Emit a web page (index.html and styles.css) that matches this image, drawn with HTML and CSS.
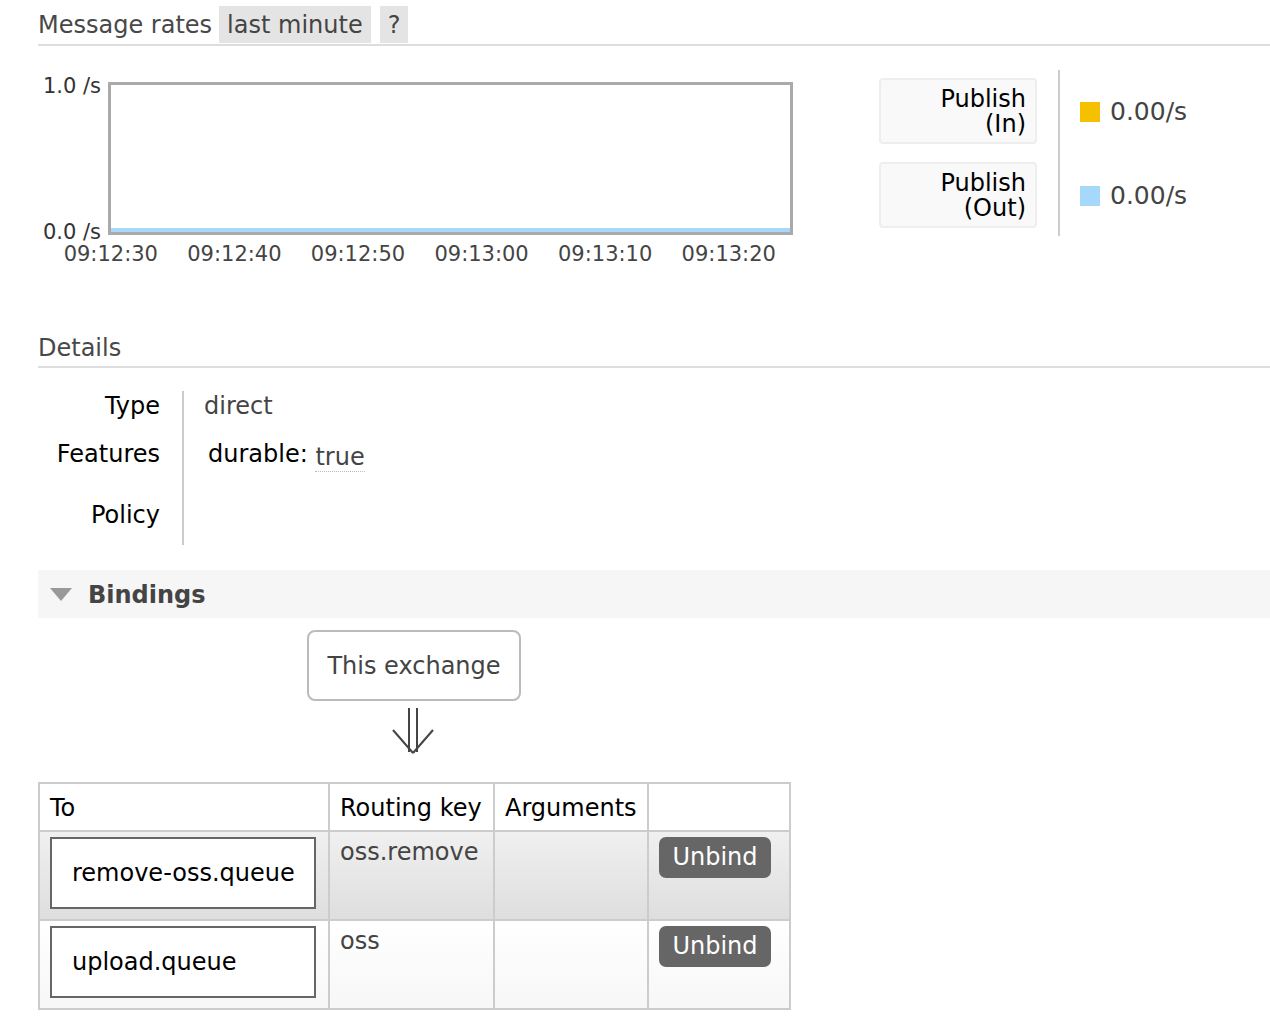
FILE: index.html
```html
<!DOCTYPE html>
<html>
<head>
<meta charset="utf-8">
<link rel="stylesheet" href="styles.css">
</head>
<body>
<div class="page">
  <h2 class="sec-head">
    <span class="sec-title">Message rates</span>
    <span class="chip"><span class="chip-text">last minute</span></span>
    <span class="chip chip-q"><span class="chip-text">?</span></span>
  </h2>

  <div class="rates">
    <div class="chart">
      <div class="chart-main">
        <div class="y-axis">
          <span>1.0 /s</span>
          <span>0.0 /s</span>
        </div>
        <div class="plot"><div class="plot-line"></div></div>
      </div>
      <div class="x-axis">
        <span>09:12:30</span>
        <span>09:12:40</span>
        <span>09:12:50</span>
        <span>09:13:00</span>
        <span>09:13:10</span>
        <span>09:13:20</span>
      </div>
    </div>

    <div class="legend">
      <div class="legend-labels">
        <div class="legend-box"><div>Publish</div><div>(In)</div></div>
        <div class="legend-box"><div>Publish</div><div>(Out)</div></div>
      </div>
      <div class="legend-values">
        <div class="legend-val"><span class="swatch swatch-in"></span>0.00/s</div>
        <div class="legend-val"><span class="swatch swatch-out"></span>0.00/s</div>
      </div>
    </div>
  </div>

  <h2 class="sec-head details-head">
    <span class="sec-title">Details</span>
  </h2>

  <div class="details">
    <div class="d-label d-r1">Type</div>
    <div class="d-value d-r1 muted">direct</div>
    <div class="d-label d-r2">Features</div>
    <div class="d-value d-r2 d-feat">durable: <span class="dotted">true</span></div>
    <div class="d-label d-r3">Policy</div>
    <div class="d-value d-r3"></div>
  </div>

  <div class="bind-head">
    <svg class="tri" width="22" height="13" viewBox="0 0 22 13"><polygon points="0,0 22,0 11,13" fill="#999"/></svg>
    <span class="bind-title">Bindings</span>
  </div>

  <div class="exchange-box">This exchange</div>
  <svg class="arrow" width="44" height="50" viewBox="0 0 44 50">
    <g stroke="#444" stroke-width="2" fill="none">
      <line x1="17" y1="2" x2="17" y2="46"/>
      <line x1="25" y1="2" x2="25" y2="46"/>
      <line x1="1" y1="24" x2="21" y2="47"/>
      <line x1="41" y1="24" x2="21" y2="47"/>
    </g>
  </svg>

  <table class="bindings">
    <colgroup>
      <col class="c-to"><col class="c-rk"><col class="c-args"><col class="c-act">
    </colgroup>
    <thead>
      <tr><th>To</th><th>Routing key</th><th>Arguments</th><th></th></tr>
    </thead>
    <tbody>
      <tr class="row-alt1">
        <td><div class="queue">remove-oss.queue</div></td>
        <td class="muted">oss.remove</td>
        <td></td>
        <td><span class="btn">Unbind</span></td>
      </tr>
      <tr class="row-alt2">
        <td><div class="queue">upload.queue</div></td>
        <td class="muted">oss</td>
        <td></td>
        <td><span class="btn">Unbind</span></td>
      </tr>
    </tbody>
  </table>
</div>
</body>
</html>
```

FILE: styles.css
```css
html, body {
  margin: 0;
  padding: 0;
  background: #fff;
}
body {
  font-family: "DejaVu Sans", Verdana, sans-serif;
  font-size: 24px;
  color: #000;
}
.page {
  padding-left: 38px;
}
.sec-head {
  margin: 0;
  font-size: 24px;
  font-weight: normal;
  color: #484848;
  display: flex;
  align-items: stretch;
  padding-top: 6px;
  padding-bottom: 1px;
  border-bottom: 2px solid #ddd;
  line-height: 37px;
  height: 37px;
}
.sec-title {
  margin-right: 7px;
  position: relative;
  top: 1px;
}
.chip {
  background: #e4e4e4;
  padding: 0 8px;
  margin-right: 9px;
  color: #444;
  height: 37px;
}
.chip-text {
  position: relative;
  top: 1px;
}
.chip-q {
  padding: 0 8px;
}

/* rates */
.rates {
  display: flex;
  margin-top: 24px;
}
.chart {
  margin-top: 12px;
}
.chart-main {
  display: flex;
}
.y-axis {
  width: 63px;
  padding-right: 7px;
  display: flex;
  flex-direction: column;
  justify-content: space-between;
  align-items: flex-end;
  font-size: 21px;
  line-height: 20px;
  color: #333;
  margin-top: -6px;
  margin-bottom: -7px;
}
.plot {
  width: 685px;
  height: 153px;
  box-sizing: border-box;
  border: 3px solid #aaa;
  display: flex;
  flex-direction: column;
  justify-content: flex-end;
}
.plot-line {
  height: 4px;
  background: #a5d8fa;
}
.x-axis {
  display: flex;
  margin-left: 11px;
  margin-top: 8px;
  font-size: 21px;
  line-height: 22px;
  color: #444;
}
.x-axis span {
  width: 123.6px;
  text-align: center;
}

.legend {
  display: flex;
  margin-left: 86px;
  align-items: flex-start;
}
.legend-labels {
  display: flex;
  flex-direction: column;
  gap: 18px;
  margin-top: 8px;
  margin-right: 21px;
}
.legend-box {
  width: 158px;
  height: 66px;
  box-sizing: border-box;
  background: #f9f9f9;
  border: 2px solid #eee;
  border-radius: 4px;
  text-align: right;
  padding: 7px 9px 0 0;
  line-height: 25px;
}
.legend-box div {
  height: 25px;
}
.legend-values {
  border-left: 2px solid #ccc;
  height: 166px;
  padding-left: 20px;
  display: flex;
  flex-direction: column;
  padding-top: 28px;
  box-sizing: border-box;
  gap: 56px;
}
.legend-val {
  display: flex;
  align-items: center;
  font-size: 25px;
  line-height: 28px;
  color: #444;
}
.swatch {
  width: 20px;
  height: 20px;
  margin-right: 10px;
  display: inline-block;
}
.swatch-in { background: #f4c000; }
.swatch-out { background: #a5d8fa; }

/* details */
.details-head {
  margin-top: 64px;
  padding-top: 0;
  padding-bottom: 0;
}
.details {
  display: grid;
  grid-template-columns: 144px auto;
  grid-template-rows: 48px 61px 45px;
  margin-top: 23px;
  line-height: 28px;
}
.d-label {
  text-align: right;
  padding-right: 22px;
  padding-top: 1px;
}
.d-value {
  border-left: 2px solid #ccc;
  padding-left: 20px;
  padding-top: 1px;
}
.d-feat {
  padding-left: 24px;
}
.muted {
  color: #444;
}
.dotted {
  color: #444;
  border-bottom: 1px dotted #bbb;
  position: relative;
  top: 3px;
}

/* bindings */
.bind-head {
  margin-top: 25px;
  height: 48px;
  background: #f6f6f6;
  display: flex;
  align-items: center;
}
.tri {
  margin-left: 12px;
  margin-right: 16px;
}
.bind-title {
  font-weight: bold;
  color: #444;
  position: relative;
  top: 1px;
}
.exchange-box {
  margin-top: 12px;
  margin-left: 269px;
  width: 214px;
  height: 71px;
  box-sizing: border-box;
  border: 2px solid #bbb;
  border-radius: 8px;
  display: flex;
  align-items: center;
  justify-content: center;
  color: #444;
}
.arrow {
  display: block;
  margin-left: 354px;
  margin-top: 5px;
}
.bindings {
  margin-top: 26px;
  border-collapse: collapse;
  table-layout: fixed;
  width: 751px;
  border: 2px solid #ccc;
}
.c-to { width: 290px; }
.c-rk { width: 165px; }
.c-args { width: 154px; }
.c-act { width: 142px; }
.bindings th,
.bindings td {
  border: 2px solid #ccc;
  text-align: left;
  vertical-align: top;
}
.bindings th {
  font-weight: normal;
  height: 46px;
  box-sizing: border-box;
  padding: 3px 10px 0;
  line-height: 43px;
  vertical-align: middle;
}
.bindings td {
  padding: 5px 10px 10px;
  line-height: 30px;
}
.row-alt1 td {
  background: linear-gradient(#f0f0f0, #dedede);
}
.row-alt2 td {
  background: linear-gradient(#ffffff, #f7f7f7);
}
.queue {
  width: 266px;
  height: 72px;
  box-sizing: border-box;
  border: 2px solid #666;
  background: #fff;
  padding-left: 20px;
  display: flex;
  align-items: center;
}
.btn {
  display: inline-block;
  width: 112px;
  height: 41px;
  line-height: 41px;
  text-align: center;
  background: #666;
  color: #fff;
  border-radius: 7px;
}
```
